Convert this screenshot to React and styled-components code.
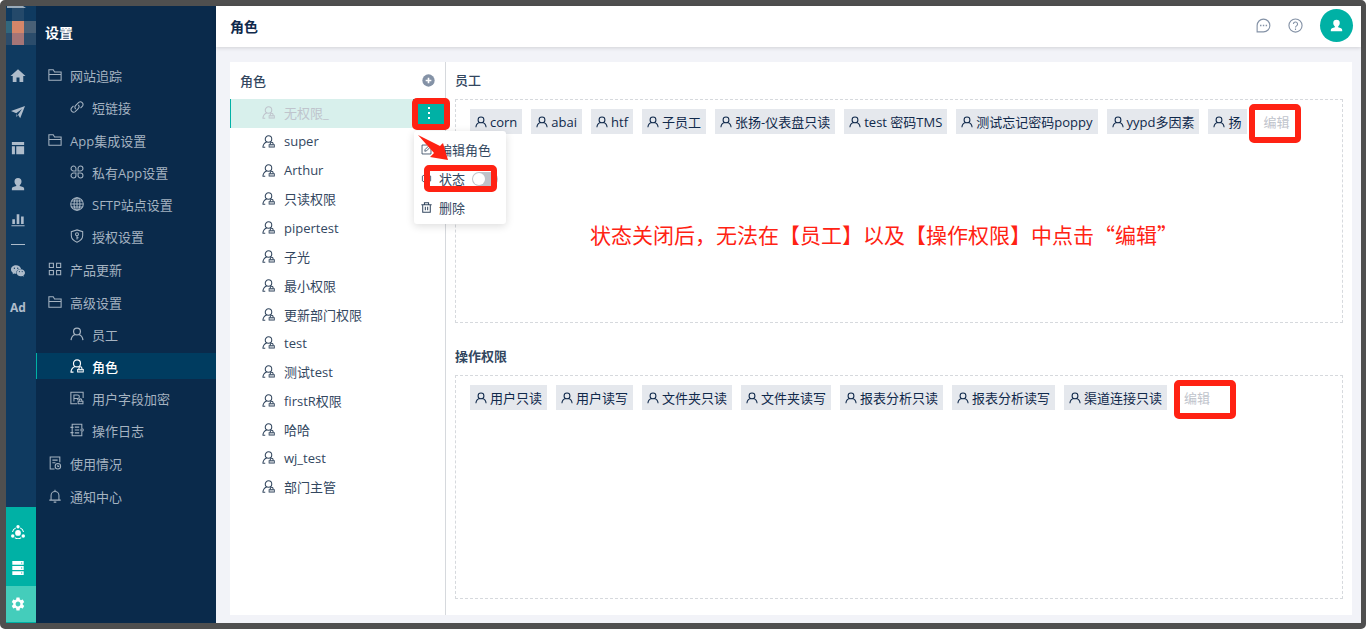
import React, {useState} from 'react';
import styled, {createGlobalStyle, css} from 'styled-components';
import {AiFillWechat} from 'react-icons/ai';
import {MdSettings, MdHome} from 'react-icons/md';

const font = '"Open Sans", "Noto Sans CJK SC", sans-serif';

const colors = {
  teal: '#00b1a5',
  tealLight: '#44cdbb',
  rail: '#0f3a60',
  side: '#0a2a4b',
  sideActive: '#003c60',
  sideText: '#a5b3c1',
  text: '#33475f',
  dark: '#10294b',
  muted: '#bfc4cc',
  line: '#d6d9dd',
  red: '#ff2213',
};

const GlobalStyle = createGlobalStyle`
  * {
    box-sizing: border-box;
  }
  body {
    margin: 0;
    background: #fff;
    font-family: ${font};
    font-size: 13px;
    color: ${colors.text};
  }
  ul {
    list-style: none;
    margin: 0;
    padding: 0;
  }
  button {
    font: inherit;
    color: inherit;
    background: none;
    border: 0;
    padding: 0;
    cursor: pointer;
  }
  a {
    color: inherit;
    text-decoration: none;
  }
`;

/* icons */

const Svg = styled.svg.attrs({viewBox: '0 0 16 16', 'aria-hidden': true})`
  flex: none;
  width: ${p => p.$size || 14}px;
  height: ${p => p.$size || 14}px;
  fill: none;
  stroke: currentColor;
  stroke-width: ${p => p.$weight || 1.2};
`;

const SolidSvg = styled(Svg)`
  fill: currentColor;
  stroke: none;
`;

const FolderIcon = () => (
  <Svg>
    <path d="M1 14V2h5l1.5 2.5H15V14zM1 7.500h14" />
  </Svg>
);

const LinkIcon = () => (
  <Svg>
    <path d="M6.600 10.400a3 3 0 0 1 0-4.200l3.400-3.400a3 3 0 0 1 4.200 4.200l-2.200 2.200M9.400 5.600a3 3 0 0 1 0 4.200l-3.400 3.400a3 3 0 0 1-4.200-4.200l2.200-2.200" />
  </Svg>
);

const CloverIcon = () => (
  <Svg>
    <path d="M6.800 6.800H4a2.800 2.800 0 1 1 2.800-2.800zM9.200 6.800V4A2.800 2.800 0 1 1 12 6.800zM6.800 9.200V12A2.800 2.800 0 1 1 4 9.200zM9.200 9.200H12A2.800 2.800 0 1 1 9.200 12z" />
  </Svg>
);

const GlobeIcon = () => (
  <Svg>
    <circle cx="8" cy="8" r="7.200" />
    <ellipse cx="8" cy="8" rx="3.400" ry="7.200" />
    <path d="M8 1v14M1 8h14M2 4.500h12M2 11.500h12" />
  </Svg>
);

const ShieldIcon = () => (
  <Svg>
    <path d="M8 1l6.500 2v4.500c0 3.500-2.500 6-6.500 7.700-4-1.700-6.500-4.200-6.500-7.700V3z" />
    <circle cx="8" cy="6" r="1.700" />
    <path d="M8 7.700v4.300M8 10h1.800" />
  </Svg>
);

const GridIcon = () => (
  <Svg>
    <path d="M1.500 1.500h4.700v4.700H1.500zM9.800 1.500h4.700v4.700H9.800zM1.500 9.800h4.700v4.700H1.500zM9.800 9.800h4.700v4.700H9.800z" />
  </Svg>
);

const UserIcon = ({size}) => (
  <Svg $size={size} $weight={1.4}>
    <circle cx="8" cy="5.200" r="3.900" />
    <path d="M1.200 15c.3-3.300 2-5.600 4.800-6.400M14.800 15c-.3-3.300-2-5.600-4.800-6.400" />
  </Svg>
);

const RoleIcon = ({size}) => (
  <Svg $size={size} $weight={1.3}>
    <circle cx="8" cy="5" r="4" />
    <path d="M1 15.500c.3-3.700 2-6 4.800-6.900M.8 15h3.200" />
    <path d="M10.200 11.800V10.600a1.700 1.700 0 0 1 3.400 0v1.200" />
    <rect x="8.700" y="11.900" width="6.500" height="3" strokeWidth="1" fill="currentColor" fillOpacity="0.3" />
  </Svg>
);

const FieldIcon = () => (
  <Svg>
    <path d="M15 8V1.500H1v13h7" />
    <path d="M4.500 12V4.500h4.200a2 2 0 0 1 0 4H4.500M8 8.500l1.500 2" />
    <path d="M10.500 11.500v-1a1.500 1.500 0 0 1 3 0v1M9.300 11.600h5.500v3H9.300z" />
  </Svg>
);

const LogIcon = () => (
  <Svg>
    <path d="M2.500 5V1.500h11V6M13.500 10v4.500h-11V11M5.500 4.700h5M5.500 8h5M5.500 11.300h5M.5 5h3.500M.5 11h3.500M2.500 5v6" />
    <circle cx="13.800" cy="8" r="1.400" />
  </Svg>
);

const UsageIcon = () => (
  <Svg>
    <path d="M13.500 7V1.200h-11v13.600h5M5 4.700h6M5 7.700h3.500" />
    <circle cx="11.300" cy="11.700" r="3.100" />
    <path d="M11.300 10v2h1.500" />
  </Svg>
);

const BellIcon = () => (
  <Svg>
    <path d="M3.500 12.500V7.300a4.500 4.500 0 0 1 9 0v5.200M1.500 12.700h13M6.500 15h3M8 .8v2" />
  </Svg>
);

const PlaneIcon = () => (
  <SolidSvg>
    <path d="M0 6.800L16 1 10.500 15 8 11.200 12.500 4.500 6 9.400z" />
    <path d="M6.200 10.300l1.400 2-1.400 1.500z" />
  </SolidSvg>
);

const LayoutIcon = () => (
  <SolidSvg>
    <path d="M1 1h14v3.500H1zM1 6h3.500v9H1zM6 6h9v9H6z" />
  </SolidSvg>
);

const PersonIcon = ({size}) => (
  <SolidSvg $size={size}>
    <path d="M8 1a4 4 0 0 1 4 4c0 2-1 3.400-2 4.300v.9l3.600 1.300c.9.400 1.400 1 1.400 2V15H1v-1.500c0-1 .5-1.600 1.400-2L6 10.200v-.9C5 8.400 4 7 4 5a4 4 0 0 1 4-4z" />
  </SolidSvg>
);

const BarsIcon = () => (
  <SolidSvg>
    <path d="M1.500 7h3v5.500h-3zM6.500 1.500h3v11h-3zM11.500 4h3v8.500h-3zM.5 14h15v1.200H.5z" />
  </SolidSvg>
);

const OrbitIcon = () => (
  <Svg>
    <circle cx="8" cy="9" r="3.300" fill="currentColor" stroke="none" />
    <path d="M10.500 3.300A6.500 6.500 0 0 1 14.300 8M5.500 3.300A6.500 6.500 0 0 0 1.700 8M4.300 14.500a6.500 6.500 0 0 0 7.400 0" />
    <circle cx="8" cy="2" r="1.900" fill="currentColor" stroke="none" />
    <circle cx="2" cy="12.500" r="2" fill="currentColor" stroke="none" />
    <circle cx="14" cy="12.500" r="2" fill="currentColor" stroke="none" />
  </Svg>
);

const ServerIcon = () => (
  <SolidSvg>
    <path fillRule="evenodd" d="M1.500 0h13v4.400h-13zM11.500 1.600v1.200h1.300V1.600zM1.500 5.800h13v4.400h-13zM11.500 7.400v1.200h1.300V7.400zM1.500 11.600h13V16h-13zM11.500 13.200v1.200h1.300v-1.200z" />
  </SolidSvg>
);

const ChatIcon = () => (
  <Svg $size={15}>
    <path d="M1.200 14.800V8A6.800 6.800 0 1 1 8 14.800z" />
    <path d="M4.300 8h1.500M7.300 8h1.500M10.300 8h1.500" strokeWidth="1.500" />
  </Svg>
);

const HelpIcon = () => (
  <Svg $size={15}>
    <circle cx="8" cy="8" r="7" />
    <path d="M5.800 6.500a2.200 2.200 0 1 1 3.300 1.900c-.8.500-1.100.8-1.100 1.600M8 11.300v1.400" />
  </Svg>
);

const PlusIcon = () => (
  <Svg $size={13}>
    <circle cx="8" cy="8" r="7.600" fill="#8492a6" stroke="none" />
    <path d="M8 4.500v7M4.500 8h7" stroke="#fff" strokeWidth="2" />
  </Svg>
);

const EditIcon = () => (
  <Svg $size={11}>
    <path d="M9 1.500H1.500v13h13V7" />
    <path d="M5.500 10.500l.5-2.500 7-7 2 2-7 7z" />
  </Svg>
);

const StateIcon = () => (
  <Svg $size={11}>
    <circle cx="8" cy="8" r="2.300" />
    <path d="M8 1l6 3.500v7L8 15l-6-3.500v-7z" />
  </Svg>
);

const TrashIcon = () => (
  <Svg $size={11} $weight={1.5}>
    <path d="M.5 4h15M5 4V1.200h6V4M2.500 4v11h11V4M6.300 7v5M9.700 7v5" />
  </Svg>
);

const LogoIcon = () => (
  <svg width="30" height="40" viewBox="0 0 30 40" aria-hidden="true">
    <path d="M1 0h16l3 2H1z" fill="#9aabba" />
    <path d="M6 2h12v13H6z" fill="#24496a" />
    <path d="M0 15h6v12H0z" fill="#32677d" />
    <path d="M18 15h12v12H18z" fill="#496076" />
    <path d="M0 27h6v12H0zM18 27h12v12H18z" fill="#2b4c6b" />
    <path d="M6 15h12v12H6z" fill="#d58669" />
    <path d="M6 27h12v12H6z" fill="#a57577" />
  </svg>
);

/* data */

const navGroups = [
  {label: '网站追踪', icon: FolderIcon, items: [{label: '短链接', icon: LinkIcon}]},
  {
    label: 'App集成设置',
    icon: FolderIcon,
    items: [
      {label: '私有App设置', icon: CloverIcon},
      {label: 'SFTP站点设置', icon: GlobeIcon},
      {label: '授权设置', icon: ShieldIcon},
    ],
  },
  {label: '产品更新', icon: GridIcon, items: []},
  {
    label: '高级设置',
    icon: FolderIcon,
    items: [
      {label: '员工', icon: UserIcon},
      {label: '角色', icon: RoleIcon, active: true},
      {label: '用户字段加密', icon: FieldIcon},
      {label: '操作日志', icon: LogIcon},
    ],
  },
  {label: '使用情况', icon: UsageIcon, items: []},
  {label: '通知中心', icon: BellIcon, items: []},
];

const roles = [
  '无权限_', 'super', 'Arthur', '只读权限', 'pipertest', '子光', '最小权限',
  '更新部门权限', 'test', '测试test', 'firstR权限', '哈哈', 'wj_test', '部门主管',
];

const staff = [
  'corn', 'abai', 'htf', '子员工', '张扬-仪表盘只读', 'test 密码TMS',
  '测试忘记密码poppy', 'yypd多因素', '扬',
];

const permissions = [
  '用户只读', '用户读写', '文件夹只读', '文件夹读写', '报表分析只读', '报表分析读写', '渠道连接只读',
];

/* parts */

const Rail = () => (
  <RailNav aria-label="主导航">
    <Logo><LogoIcon /></Logo>
    <RailButton aria-label="首页"><MdHome size={18} /></RailButton>
    <RailButton aria-label="发送"><PlaneIcon /></RailButton>
    <RailButton aria-label="页面"><LayoutIcon /></RailButton>
    <RailButton aria-label="联系人"><PersonIcon /></RailButton>
    <RailButton aria-label="报表"><BarsIcon /></RailButton>
    <RailDivider />
    <RailButton aria-label="微信"><AiFillWechat size={16} /></RailButton>
    <RailButton>Ad</RailButton>
    <RailBottom>
      <RailButton aria-label="集成"><OrbitIcon /></RailButton>
      <RailButton aria-label="数据"><ServerIcon /></RailButton>
      <RailButton aria-label="设置" $active><MdSettings size={16} /></RailButton>
    </RailBottom>
  </RailNav>
);

const Sidebar = () => (
  <SideNav>
    <SideTitle>设置</SideTitle>
    <NavGroups>
      {navGroups.map(group => (
        <NavGroup key={group.label}>
          <NavLink href="#"><group.icon />{group.label}</NavLink>
          {group.items.map(item => (
            <NavLink key={item.label} href="#" $child $active={item.active}>
              <item.icon />{item.label}
            </NavLink>
          ))}
        </NavGroup>
      ))}
    </NavGroups>
  </SideNav>
);

const RoleMenu = ({enabled, onToggle}) => (
  <Menu>
    <MenuItem><MenuButton><EditIcon />编辑角色</MenuButton></MenuItem>
    <MenuItem>
      <StateLabel>
        <StateIcon />状态
        <Switch type="checkbox" checked={enabled} onChange={onToggle} />
      </StateLabel>
      <Mark $inset="1px 9px 1px 10px" />
    </MenuItem>
    <MenuItem><MenuButton><TrashIcon />删除</MenuButton></MenuItem>
    <Arrow viewBox="0 0 34 30" aria-hidden="true">
      <path d="M1 1L23 12l3-3 5 17-18-3 4-4z" />
    </Arrow>
  </Menu>
);

const Panel = ({title, items, editInset, bold, children}) => (
  <PanelSection>
    <PanelTitle $bold={bold}>{title}</PanelTitle>
    <PanelBox>
      <Chips>
        {items.map(item => (
          <Chip key={item}><UserIcon size={12} />{item}</Chip>
        ))}
        <EditItem>
          <EditButton disabled>编辑</EditButton>
          <Mark $inset={editInset} />
        </EditItem>
      </Chips>
      {children}
    </PanelBox>
  </PanelSection>
);

function App() {
  const [enabled, setEnabled] = useState(false);

  return (
    <Frame>
      <GlobalStyle />
      <Rail />
      <Sidebar />
      <Main>
        <Header>
          <PageTitle>角色</PageTitle>
          <HeaderButton aria-label="消息"><ChatIcon /></HeaderButton>
          <HeaderButton aria-label="帮助"><HelpIcon /></HeaderButton>
          <Avatar aria-label="账户"><PersonIcon size={13} /></Avatar>
        </Header>
        <Card>
          <RoleColumn>
            <RoleHeader>
              <RoleTitle>角色</RoleTitle>
              <HeaderButton aria-label="新增角色"><PlusIcon /></HeaderButton>
            </RoleHeader>
            <RoleList>
              {roles.map((role, i) => (
                <RoleRow key={role} $active={i === 0}>
                  <RoleButton><RoleIcon size={13} />{role}</RoleButton>
                  {i === 0 && (
                    <MoreWrap>
                      <MoreButton aria-label="更多"><i /><i /><i /></MoreButton>
                      <Mark $inset="-1px -6px -2px -1px" />
                      <RoleMenu enabled={enabled} onToggle={() => setEnabled(!enabled)} />
                    </MoreWrap>
                  )}
                </RoleRow>
              ))}
            </RoleList>
          </RoleColumn>
          <Panels>
            <Panel title="员工" items={staff} editInset="-5px -11px -9px -15px">
              <Note>状态关闭后，无法在【员工】以及【操作权限】中点击“编辑”</Note>
            </Panel>
            <Panel title="操作权限" items={permissions} editInset="-5px -26px -9px -10px" bold />
          </Panels>
        </Card>
      </Main>
    </Frame>
  );
}

const Frame = styled.div`
  display: flex;
  min-height: 100vh;
  border: 6px solid #4f4f4f;
  border-right-width: 5px;
  border-radius: 5px;
  background: #f2f3f8;
`;

const RailNav = styled.nav`
  display: flex;
  flex-direction: column;
  flex: none;
  width: 30px;
  background: ${colors.rail};
  color: #aebccb;
`;

const Logo = styled.div`
  height: 52px;

  svg {
    display: block;
  }
`;

const RailButton = styled.button`
  display: flex;
  align-items: center;
  justify-content: center;
  width: 24px;
  height: 36px;
  font-size: 12px;
  font-weight: 700;
  ${p => p.$active && css`
    width: 30px;
    padding-right: 6px;
    background: ${colors.tealLight};
  `}
`;

const RailDivider = styled.hr`
  width: 14px;
  height: 1px;
  margin: 6px 5px 8px;
  border: 0;
  background: #aebccb;
`;

const RailBottom = styled.div`
  margin-top: auto;
  padding: 7px 0 1px;
  background: ${colors.teal};
  color: #fff;
`;

const SideNav = styled.nav`
  flex: none;
  width: 180px;
  background: ${colors.side};
  color: ${colors.sideText};
`;

const SideTitle = styled.h1`
  height: 53px;
  margin: 0;
  padding-left: 9px;
  line-height: 54px;
  font-size: 14px;
  font-weight: 700;
  color: #fff;
`;

const NavGroups = styled.ul`
  display: flex;
  flex-direction: column;
  gap: 1px;
`;

const NavGroup = styled.li`
  display: flex;
  flex-direction: column;
`;

const NavLink = styled.a`
  display: flex;
  align-items: center;
  gap: 8px;
  height: 26px;
  margin: 3px 0;
  padding-left: ${p => (p.$child ? 34 : 12)}px;
  ${p => p.$active && css`
    background: ${colors.sideActive};
    box-shadow: inset 1px 0 ${colors.teal};
    color: #fff;
    font-weight: 500;
  `}
`;

const Main = styled.main`
  display: flex;
  flex-direction: column;
  flex: 1;
  min-width: 0;
`;

const Header = styled.header`
  display: flex;
  align-items: center;
  gap: 17px;
  height: 41px;
  padding: 0 8px 2px 14px;
  background: #fff;
  box-shadow: 0 1px 4px rgba(0, 0, 0, 0.14);
`;

const PageTitle = styled.h2`
  flex: 1;
  margin: 0;
  font-size: 14px;
  font-weight: 700;
  color: ${colors.dark};
`;

const HeaderButton = styled.button`
  display: flex;
  color: #8492a6;
`;

const Avatar = styled.button`
  display: flex;
  align-items: center;
  justify-content: center;
  width: 33px;
  height: 33px;
  border-radius: 50%;
  background: ${colors.teal};
  color: #fff;
`;

const Card = styled.div`
  display: flex;
  flex: 1;
  margin: 15px 9px 8px 14px;
  background: #fff;
`;

const RoleColumn = styled.section`
  flex: none;
  width: 216px;
  border-right: 1px solid ${colors.line};
`;

const RoleHeader = styled.div`
  display: flex;
  align-items: center;
  justify-content: space-between;
  height: 37px;
  padding: 0 10px;
`;

const RoleTitle = styled.h3`
  margin: 0;
  font-size: 13px;
  font-weight: 500;
`;

const RoleList = styled.ul`
  display: grid;
  grid-auto-rows: 1fr;
  min-height: 403px;
`;

const RoleRow = styled.li`
  display: flex;
  ${p => p.$active && css`
    background: #d8f0ec;
    box-shadow: inset 1px 0 ${colors.teal};
    color: ${colors.muted};
  `}
`;

const RoleButton = styled.button`
  display: flex;
  align-items: center;
  gap: 9px;
  flex: 1;
  height: 27px;
  padding-left: 32px;
`;

const MoreWrap = styled.div`
  position: relative;
  display: flex;
  margin-right: 1px;
`;

const MoreButton = styled.button`
  display: flex;
  flex-direction: column;
  align-items: center;
  justify-content: center;
  gap: 3px;
  width: 31px;
  background: ${colors.teal};

  i {
    width: 2px;
    height: 2px;
    background: #fff;
  }
`;

/* hand-drawn style highlight laid over a control */
const Mark = styled.span`
  position: absolute;
  inset: ${p => p.$inset};
  border: 6px solid ${colors.red};
  border-radius: 5px;
  pointer-events: none;
`;

const Menu = styled.ul`
  position: absolute;
  z-index: 2;
  top: 32px;
  left: 1px;
  width: 92px;
  padding: 4px 0 2px;
  border-radius: 3px;
  background: #fff;
  box-shadow: 0 2px 8px rgba(0, 0, 0, 0.14);
  color: ${colors.text};
`;

const MenuItem = styled.li`
  position: relative;
`;

const menuRow = css`
  display: flex;
  align-items: center;
  gap: 7px;
  width: 100%;
  height: 29px;
  padding-left: 7px;
`;

const MenuButton = styled.button`
  ${menuRow}
`;

const StateLabel = styled.label`
  ${menuRow}
`;

const Switch = styled.input`
  appearance: none;
  display: flex;
  align-items: center;
  width: 26px;
  height: 14px;
  margin: 0;
  padding: 1px;
  border-radius: 7px;
  background: ${p => (p.checked ? colors.teal : '#bfc2c9')};

  &::before {
    content: '';
    width: 12px;
    height: 12px;
    margin-left: ${p => (p.checked ? 12 : 0)}px;
    border-radius: 50%;
    background: #fff;
  }
`;

const Arrow = styled.svg`
  position: absolute;
  top: 3px;
  left: 3px;
  width: 34px;
  height: 30px;
  fill: ${colors.red};
`;

const Panels = styled.div`
  display: flex;
  flex-direction: column;
  gap: 15px;
  flex: 1;
  min-width: 0;
  padding: 0 9px 16px;
`;

const PanelSection = styled.section`
  display: flex;
  flex-direction: column;
  flex: 1;
`;

const PanelTitle = styled.h3`
  margin: 0;
  line-height: 37px;
  font-size: 13px;
  font-weight: ${p => (p.$bold ? 700 : 500)};
`;

const PanelBox = styled.div`
  flex: 1;
  padding: 9px 14px;
  border: 1px dashed ${colors.line};
`;

const Chips = styled.ul`
  display: flex;
  flex-wrap: wrap;
  gap: 9px;
`;

const Chip = styled.li`
  display: flex;
  align-items: center;
  gap: 3px;
  height: 25px;
  padding: 0 5px;
  background: #e5e8ed;
  color: ${colors.dark};
  white-space: nowrap;
`;

const EditItem = styled.li`
  position: relative;
  display: flex;
  height: 25px;
  margin-left: 8px;
`;

const EditButton = styled.button`
  color: ${colors.muted};
`;

const Note = styled.p`
  margin: 84px 0 0 120px;
  line-height: 32px;
  font-family: "Noto Sans CJK SC", sans-serif;
  font-size: 21px;
  color: ${colors.red};
`;

export default App;
